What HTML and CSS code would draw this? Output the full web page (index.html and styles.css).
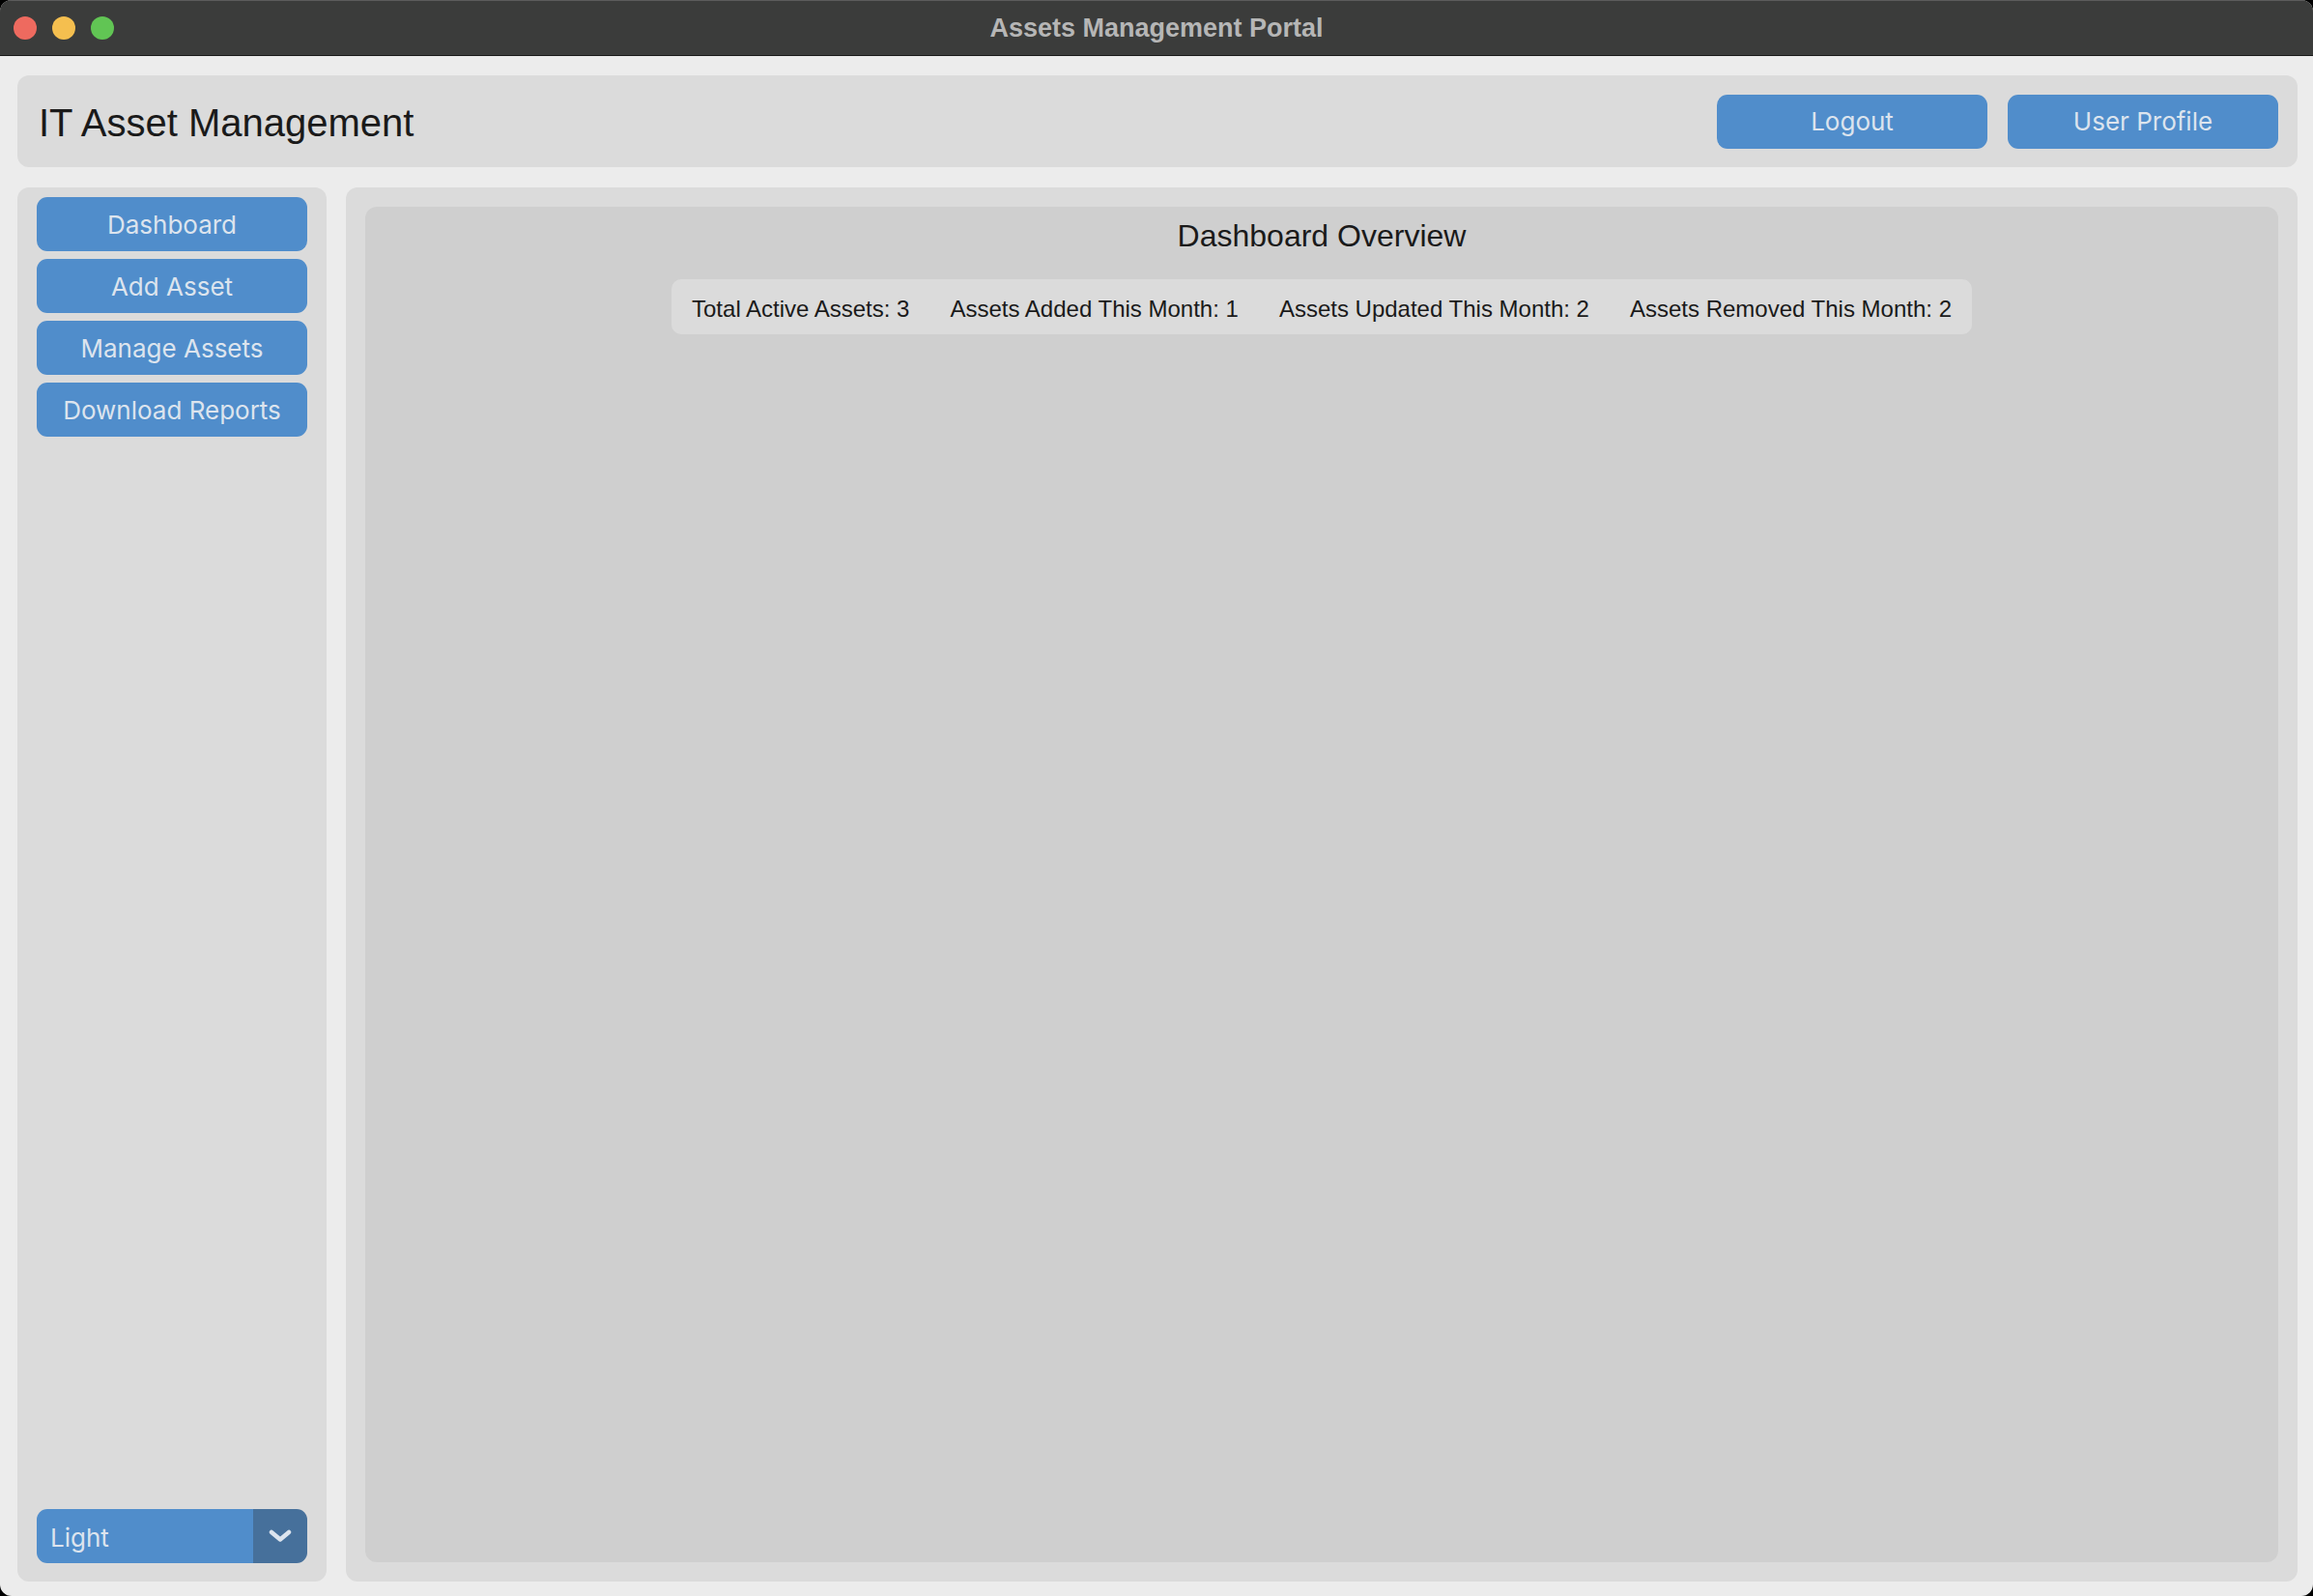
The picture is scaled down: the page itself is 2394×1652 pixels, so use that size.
FILE: index.html
```html
<!DOCTYPE html>
<html lang="en">
<head>
<meta charset="utf-8">
<title>Assets Management Portal</title>
<link rel="stylesheet" href="styles.css">
</head>
<body>
<div class="window">
  <div class="titlebar">
    <div class="lights">
      <span class="light red"></span>
      <span class="light yellow"></span>
      <span class="light green"></span>
    </div>
    <div class="wtitle">Assets Management Portal</div>
    <div class="spacer"></div>
  </div>
  <div class="content">
    <div class="header">
      <div class="apptitle">IT Asset Management</div>
      <div class="hbuttons">
        <div class="btn">Logout</div>
        <div class="btn">User Profile</div>
      </div>
    </div>
    <div class="bodyrow">
      <div class="sidebar">
        <div class="btn">Dashboard</div>
        <div class="btn">Add Asset</div>
        <div class="btn">Manage Assets</div>
        <div class="btn">Download Reports</div>
        <div class="dropdown">
          <div class="dd-label">Light</div>
          <div class="dd-arrow">
            <svg width="24" height="14" viewBox="0 0 24 14"><path d="M3 3 L12 10.5 L21 3" fill="none" stroke="#dce4ee" stroke-width="4.5" stroke-linecap="round" stroke-linejoin="round"/></svg>
          </div>
        </div>
      </div>
      <div class="main">
        <div class="inner">
          <div class="overview">Dashboard Overview</div>
          <div class="stats">
            <span class="stat">Total Active Assets: 3</span>
            <span class="stat">Assets Added This Month: 1</span>
            <span class="stat">Assets Updated This Month: 2</span>
            <span class="stat">Assets Removed This Month: 2</span>
          </div>
        </div>
      </div>
    </div>
  </div>
</div>
</body>
</html>
```
FILE: styles.css
```css
html, body {
  margin: 0;
  padding: 0;
  background: #000;
}
.window {
  width: 2394px;
  height: 1652px;
  border-radius: 12px;
  overflow: hidden;
  background: #ececec;
  display: flex;
  flex-direction: column;
  box-sizing: border-box;
}
.titlebar {
  height: 58px;
  flex: none;
  box-sizing: border-box;
  background: #3b3c3b;
  border-top: 1px solid #5c5c5c;
  border-bottom: 1px solid #1c1c1c;
  display: grid;
  grid-template-columns: 1fr auto 1fr;
  align-items: center;
}
.lights {
  display: flex;
  gap: 16px;
  padding-left: 14px;
}
.light {
  width: 24px;
  height: 24px;
  border-radius: 50%;
  display: block;
}
.red { background: #ee6a5f; }
.yellow { background: #f5bf4f; }
.green { background: #61c554; }
.wtitle {
  font-family: "Liberation Sans", Arial, sans-serif;
  font-weight: bold;
  font-size: 27px;
  color: #b6b6b6;
}
.content {
  flex: 1;
  display: flex;
  flex-direction: column;
  padding: 20px 16px 15px 18px;
  min-height: 0;
}
.header {
  height: 95px;
  flex: none;
  box-sizing: border-box;
  background: #dbdbdb;
  border-radius: 12px;
  padding: 0 20px 0 22px;
  display: flex;
  align-items: center;
  justify-content: space-between;
}
.apptitle {
  font-family: "Liberation Sans", Arial, sans-serif;
  font-size: 40px;
  color: #1a1a1a;
  padding-top: 4px;
}
.hbuttons {
  display: flex;
  gap: 21px;
}
.btn {
  width: 280px;
  height: 56px;
  box-sizing: border-box;
  border-radius: 11px;
  background: #508dcb;
  color: #dce4ee;
  font-family: Inter, "Noto Sans", sans-serif;
  font-size: 26px;
  display: flex;
  align-items: center;
  justify-content: center;
}
.bodyrow {
  flex: 1;
  display: flex;
  gap: 20px;
  margin-top: 21px;
  min-height: 0;
}
.sidebar {
  width: 320px;
  flex: none;
  box-sizing: border-box;
  background: #dbdbdb;
  border-radius: 12px;
  padding: 10px 20px 19px 20px;
  display: flex;
  flex-direction: column;
  gap: 8px;
}
.dropdown {
  margin-top: auto;
  height: 56px;
  display: flex;
  border-radius: 11px;
  overflow: hidden;
}
.dd-label {
  flex: 1;
  background: #508dcb;
  color: #dce4ee;
  font-family: Inter, "Noto Sans", sans-serif;
  font-size: 26px;
  display: flex;
  align-items: center;
  padding-left: 14px;
  padding-top: 2px;
}
.dd-arrow {
  width: 56px;
  background: #46709b;
  display: flex;
  align-items: center;
  justify-content: center;
}
.dd-arrow svg {
  display: block;
}
.main {
  flex: 1;
  background: #dbdbdb;
  border-radius: 12px;
  padding: 20px;
  display: flex;
  min-width: 0;
}
.inner {
  flex: 1;
  background: #cfcfcf;
  border-radius: 12px;
  display: flex;
  flex-direction: column;
  align-items: center;
}
.overview {
  font-family: "Liberation Sans", Arial, sans-serif;
  font-size: 32px;
  line-height: 1.15;
  color: #1a1a1a;
  margin-top: 12px;
}
.stats {
  margin-top: 26px;
  height: 57px;
  box-sizing: border-box;
  padding-top: 4px;
  background: #dbdbdb;
  border-radius: 10px;
  display: flex;
  align-items: center;
}
.stat {
  font-family: "Liberation Sans", Arial, sans-serif;
  font-size: 24px;
  line-height: 1.15;
  color: #1a1a1a;
  padding: 0 21px;
  white-space: nowrap;
}
```
